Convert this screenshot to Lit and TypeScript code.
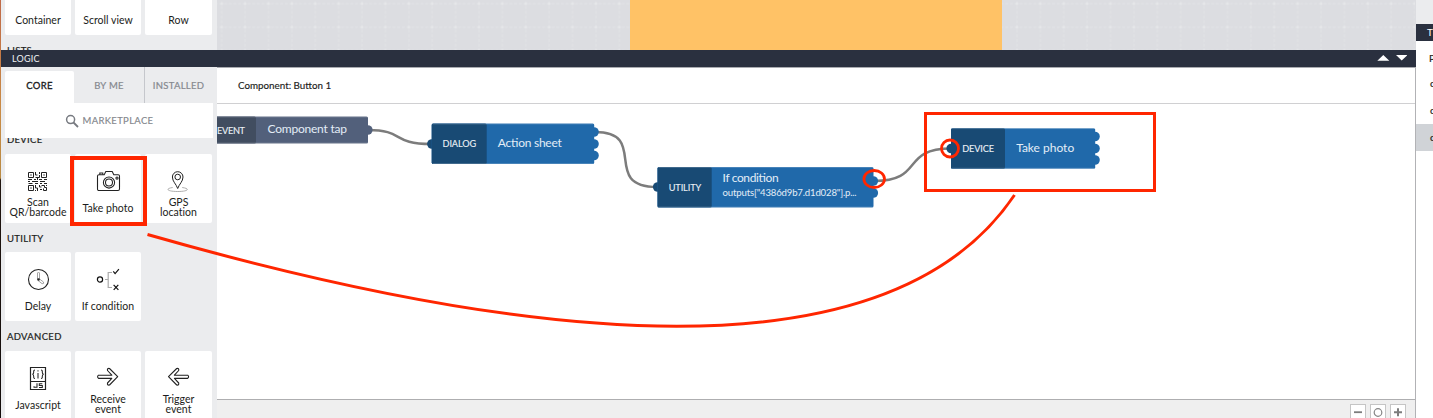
import { LitElement, html, svg, css } from "lit";
import { customElement, property } from "lit/decorators.js";

const icons: Record<string, unknown> = {
  qr: svg`<g fill="none" stroke="#222" stroke-width="1" transform="translate(-1 0)">
    <path d="M2.500 2.500h5v5h-5zM15.500 2.500h5v5h-5zM2.500 15.500h5v5h-5z"/>
    <path d="M4.500 5h1M17.500 5h1M4.500 18h1" stroke-width="1.500"/>
    <path d="M9.500 2v3h2M13.500 2v2M9.500 7.500h4V5M11.500 7v3M2 9.500h4M8 9.500h2M13 9.500h3M18 9.500h3M2 11.500h2M6 11.500h6M14 11.500h5M2.500 13.500h4M9 13.500h3M14 13.500h2M18 13.500h3M9.500 15v3h2v3M9.500 20v1M13.500 15v2h2M14 19.500h2M15.500 15.500h3v2M18.500 17.500h2v3h-3v-2M20.500 15v1"/></g>`,
  camera: svg`<g fill="none" stroke="#222" stroke-width="1.050">
    <path d="M2 4.700h5.200l1.600-3.200h6.400l1.600 3.200h4.400q1.300 0 1.300 1.300v13q0 1.500-1.500 1.500H2q-1.500 0-1.500-1.500V6q0-1.300 1.500-1.300z"/>
    <path d="M2.800 4.700V3h3v1.700M.5 8v9M22.500 8v9"/><circle cx="12" cy="12.500" r="5.600"/><circle cx="12" cy="12.500" r="3.500"/><circle cx="20" cy="8" r="1.100"/></g>`,
  pin: svg`<g fill="none" transform="translate(-.8 0)"><path d="M6.500 17.500c-8 1.200-5.500 4 5 4s13-2.800 4.500-4" stroke="#999" stroke-width=".8"/>
    <path d="M11.500 18.500C10 14 6.200 11.500 6.200 7a5.300 5.300 0 0 1 10.600 0c0 4.500-3.800 7-5.300 11.500z" stroke="#222"/><circle cx="11.500" cy="7" r="2.800" stroke="#222"/></g>`,
  clock: svg`<g fill="none"><circle cx="11.500" cy="11.500" r="10" stroke="#222" stroke-width="1.100"/><path d="M10.500 11V5q1-2 2 0v6l4 3q.8 2-1.400 1.700L11 12.500" stroke="#999" stroke-width=".9"/><circle cx="11.500" cy="11.500" r="1.300" fill="#222"/></g>`,
  branch: svg`<g fill="none"><path d="M8 11.500h3.200M15 4.500h-3.800v15H15" stroke="#aaa" stroke-width="1.200"/><circle cx="3" cy="11.500" r="2.600" stroke="#111" stroke-width="1.200"/>
    <path d="M16.300 3.300l1.800 2.300 3.800-4.500M16.600 16.800l4.800 5M21.300 16.800l-4.600 5" stroke="#111" stroke-width="1.200"/></g>`,
  js: svg`<g fill="none" stroke="#222" transform="translate(-.5 -.5)"><path d="M4 1h15v22H4zM4 15h15" stroke-width="1.200"/>
    <path d="M8.500 3.500q-1.500 0-1.300 2.300 0 1.800-1.300 2 1.300.2 1.300 2Q7 12 8.500 12M14.500 3.500q1.500 0 1.300 2.300 0 1.800 1.300 2-1.300.2-1.300 2Q16 12 14.500 12M11.500 6.500V12M11.500 3.800v1.300" stroke-width="1.050"/>
    <path d="M10.500 16.800v4H7.500v-1M15.800 17.300h-3v1.700h3v1.900h-3.300" stroke-width="1.050"/></g>`,
  right: svg`<path transform="translate(-.8 -2)" d="M2.300 10.200h13.300l-4.300-4.700q-.5-2.500 2-2l8.200 8.200-8.200 8.300q-2.500.5-2-2l4.300-4.600H2.300q-1.800-1.600 0-3.200z" fill="none" stroke="#222" stroke-width="1.100" stroke-linejoin="round"/>`,
  left: svg`<path transform="translate(0 -2)" d="M20.700 10.200H7.400l4.300-4.700q.5-2.500-2-2l-8.200 8.200L9.700 20q2.500.5 2-2l-4.300-4.600h13.300q1.800-1.600 0-3.200z" fill="none" stroke="#222" stroke-width="1.100" stroke-linejoin="round"/>`,
};

@customElement("palette-card")
class PaletteCard extends LitElement {
  @property() icon = "";
  @property({ attribute: false }) lines: string[] = [];

  static styles = css`
    :host { display: block; height: 69px; background: #fff; border-radius: 2px; }
    .card { display: flex; flex-direction: column; align-items: center; height: 69px; }
    svg { display: block; width: 23px; height: 23px; flex: none; margin-top: 16px; overflow: visible; }
    .text { flex: none; margin-top: 9px; font-size: 10.500px; line-height: 12px; letter-spacing: 0.02px; text-align: center; color: #1c1d20; white-space: nowrap; }
    .double { margin-top: 4px; line-height: 10px; }
  `;

  render() {
    return html`<div class="card">
      <svg viewBox="0 0 23 23">${icons[this.icon]}</svg>
      <div class="text ${this.lines.length > 1 ? "double" : ""}">${this.lines.map((l) => html`<div>${l}</div>`)}</div>
    </div>`;
  }
}

interface FlowNode {
  x: number; y: number; w: number; h: number; split: number;
  kind: string; kx: number; kw: number;
  title: string; tx: number; tw: number; ty: number;
  dark: string; light: string; input?: number; outputs: number[]; detail?: string;
}

const blue = { dark: "#184a74", light: "#2069aa" };
const nodes: FlowNode[] = [
  { x: 205, y: 116.500, w: 163, h: 27, split: 256, kind: "EVENT", kx: 217, kw: 28, title: "Component tap", tx: 267.500, tw: 79.500, ty: 133.200, dark: "#414d60", light: "#52607b", outputs: [130] },
  { x: 431.700, y: 123.500, w: 162.500, h: 40.500, split: 486.700, kind: "DIALOG", kx: 442.500, kw: 33.700, title: "Action sheet", tx: 497.800, tw: 64, ty: 147.400, ...blue, input: 144, outputs: [132, 144, 155.500] },
  { x: 657.500, y: 167, w: 216, h: 40.500, split: 711.700, kind: "UTILITY", kx: 668.700, kw: 32.500, title: "If condition", tx: 722.600, tw: 56, ty: 182.400, ...blue, input: 187, outputs: [181, 193], detail: 'outputs["4386d9b7.d1d028"].p...' },
  { x: 951, y: 128.200, w: 144.200, h: 40.500, split: 1005, kind: "DEVICE", kx: 962.300, kw: 31.700, title: "Take photo", tx: 1016.200, tw: 58, ty: 152.400, ...blue, input: 148.500, outputs: [136.500, 148.500, 160] },
];

const sections = [
  { name: "DEVICE", cards: [["qr", "Scan", "QR/barcode"], ["camera", "Take photo"], ["pin", "GPS", "location"]] },
  { name: "UTILITY", cards: [["clock", "Delay"], ["branch", "If condition"]] },
  { name: "ADVANCED", cards: [["js", "Javascript"], ["right", "Receive", "event"], ["left", "Trigger", "event"]] },
];

@customElement("app-root")
class AppRoot extends LitElement {
  static styles = css`
    :host { display: block; font-family: Lato, "Open Sans", sans-serif; color: #1c1d20; }
    * { box-sizing: border-box; }
    .window { position: relative; display: grid; grid-template-columns: 1px 1414px 18px; width: 1433px; height: 418px; overflow: hidden; background: #fff; }
    .edge { background: linear-gradient(#c06a48 0, #c98b45 110px, #b98a43 178px, #20150f 180px, #130d0c 418px); }
    .main { display: grid; grid-template-rows: 50px 17px 351px; min-width: 0; }
    .top { display: grid; grid-template-columns: 216px 1fr; overflow: hidden; }
    .components { background: #ebecee; overflow: hidden; }
    .row { display: grid; grid-template-columns: 66px 66px 67px; gap: 4px; padding-left: 4px; }
    .stub { display: flex; align-items: flex-end; justify-content: center; height: 35px; padding-bottom: 8px; background: #fff; border-radius: 0 0 2px 2px; font-size: 10.500px; line-height: 13px; letter-spacing: 0.02px; }
    .heading { padding: 1px 0 0 6px; font-size: 9.500px; line-height: 12px; letter-spacing: 0.32px; -webkit-text-stroke: 0.2px #1c1d20; }
    .lists { margin-top: 9px; }
    .artboard { display: flex; justify-content: flex-start; background: #dcdde1; }
    .artboard svg { display: block; width: 1198px; height: 50px; }
    .bar { display: flex; align-items: center; justify-content: space-between; padding: 0 9px 0 11px; background: #2a303f; color: #f1f2f5; font-size: 9px; letter-spacing: 0.2px; }
    .bar svg { width: 30px; height: 17px; display: block; }
    .body { display: grid; grid-template-columns: 216px 1fr; min-height: 0; }
    .side { display: flex; flex-direction: column; background: #ebecee; overflow: hidden; }
    .tabs { flex: none; display: grid; grid-template-columns: 69px 71px 67px; height: 36px; padding-left: 4px; }
    .tab { display: flex; align-items: center; justify-content: center; padding-top: 1px; font-size: 9.500px; letter-spacing: 0.3px; color: #85888e; -webkit-text-stroke: 0.2px #85888e; }
    .middle { border-right: 1px solid #c5c7cc; }
    .active { margin-top: 4px; padding-top: 0; padding-bottom: 3px; background: #fff; border-radius: 2px 2px 0 0; color: #17181b; -webkit-text-stroke: 0.3px #17181b; }
    .market { flex: none; display: flex; align-items: center; justify-content: center; gap: 4px; width: 208px; height: 35px; margin-left: 4px; background: #fff; font-size: 9.500px; letter-spacing: 0.32px; color: #83868c; -webkit-text-stroke: 0.15px #83868c; }
    .market svg { width: 14px; height: 14px; }
    .list { flex: 1; min-height: 0; overflow: hidden; }
    .section { height: 98px; }
    .section .heading { height: 20px; }
    .section:first-child { margin-top: -5px; height: 99px; }
    .section:first-child .heading { height: 21px; }
    .section:last-child .heading { height: 21px; }
    .work { display: grid; grid-template-rows: 37px 295px 19px; border-right: 1px solid #b2b2b5; background: #fff; min-width: 0; width: 1199px; }
    .crumb { display: flex; align-items: center; padding: 0 0 1px 21px; border-top: 1px solid #a9abb0; border-bottom: 1px solid #d0d0d2; font-size: 9.800px; letter-spacing: 0; -webkit-text-stroke: 0.15px #1c1d20; }
    .flow { display: block; width: 1198px; height: 295px; }
    .foot { display: flex; justify-content: flex-end; gap: 4px; padding: 4px 9px 0 0; border-top: 1px solid #aeaeb0; background: #efefef; overflow: hidden; }
    .zoom { flex: none; width: 16px; height: 16px; border: 1px solid #c5c5c5; background: #fff; }
    .zoom svg { display: block; width: 14px; height: 14px; }
    .right { position: relative; overflow: hidden; font-size: 10px; white-space: nowrap; }
    .cap { height: 24px; margin-left: 1px; background: #ebecee; }
    .title { height: 17px; margin-left: 1px; padding-left: 11px; line-height: 17px; background: #2a303f; color: #fff; }
    .item { height: 27px; margin-left: 1px; padding-left: 14px; line-height: 27px; -webkit-text-stroke: 0.2px #1c1d20; }
    .first { height: 29px; padding: 4px 0 0 13px; }
    .selected { background: #d0d3d7; }
    .notes { position: absolute; inset: 0; width: 1433px; height: 418px; pointer-events: none; }
  `;

  private node(n: FlowNode) {
    const mid = n.y + n.h / 2;
    return svg`<g>
      ${n.outputs.map((y) => svg`<circle cx=${n.x + n.w - 0.2} cy=${y} r="4.800" fill=${n.light}/>`)}
      ${n.input ? svg`<circle cx=${n.x + 0.2} cy=${n.input} r="4.800" fill=${n.dark}/>` : ""}
      <rect x=${n.x} y=${n.y} width=${n.w} height=${n.h} rx="1.500" fill=${n.light}/>
      <rect x=${n.x} y=${n.y} width=${n.split - n.x} height=${n.h} rx="1.500" fill=${n.dark}/>
      <path d="M${n.x + 1} ${n.y + 0.4}H${n.x + n.w - 1}M${n.x + 1} ${n.y + n.h - 0.4}H${n.x + n.w - 1}" stroke="#fff" stroke-opacity=".25" stroke-width=".8"/>
      <text x=${n.kx} y=${mid + 3.5} font-size="9.200" fill="#edf2f7" stroke="#edf2f7" stroke-width=".1" textLength=${n.kw}>${n.kind}</text>
      <text x=${n.tx} y=${n.ty} font-size="12" fill="#e3edf7" textLength=${n.tw}>${n.title}</text>
      ${n.detail ? svg`<text x=${n.tx} y="195.800" font-size="9.600" fill="#e3edf7" textLength="134">${n.detail}</text>` : ""}
    </g>`;
  }

  render() {
    return html`<div class="window">
      <div class="edge"></div>
      <div class="main">
        <div class="top">
          <div class="components">
            <div class="row">${["Container", "Scroll view", "Row"].map((t) => html`<div class="stub">${t}</div>`)}</div>
            <div class="heading lists">LISTS</div>
          </div>
          <div class="artboard">
            <svg viewBox="217 0 1198 50">
              <defs><pattern id="grid" patternUnits="userSpaceOnUse" x="210" y="-8" width="23.390" height="23.500">
                <path d="M0 11.700H23.390M11.700 0V23.500" stroke="#e3e4e7" stroke-width=".8" stroke-dasharray="3 1.700"/>
                <path d="M10.200 11.700h3M11.700 10.200v3" stroke="#e7e8ea"/></pattern></defs>
              <rect x="217" width="1198" height="50" fill="#dcdde1"/>
              <rect x="217" width="1198" height="50" fill="url(#grid)"/>
              <rect x="630" width="372" height="50" fill="#ffc266"/>
            </svg>
          </div>
        </div>
        <div class="bar"><span>LOGIC</span>
          <svg viewBox="1377 50 30 17"><path d="M1377.300 60.700l6-5.700 6 5.700zM1396 55h11.400l-5.700 5.600z" fill="#fff"/></svg>
        </div>
        <div class="body">
          <div class="side">
            <div class="tabs"><div class="tab active">CORE</div><div class="tab middle">BY ME</div><div class="tab">INSTALLED</div></div>
            <div class="market">
              <svg viewBox="0 0 14 14" fill="none" stroke="#777a80"><circle cx="5.600" cy="5.600" r="4" stroke-width="1.500"/><path d="M8.500 8.500l4.500 4.500" stroke-width="1.800"/></svg>
              <span>MARKETPLACE</span>
            </div>
            <div class="list">
              ${sections.map((s) => html`<div class="section"><div class="heading">${s.name}</div>
                <div class="row">${s.cards.map(([icon, ...lines]) => html`<palette-card .icon=${icon} .lines=${lines}></palette-card>`)}</div></div>`)}
            </div>
          </div>
          <div class="work">
            <div class="crumb">Component: Button 1</div>
            <svg class="flow" viewBox="217 104 1198 295">
              <g fill="none" stroke="#7c7c7c" stroke-width="2.500">
                <path d="M368 130C405 130 391 144 431 144"/>
                <path d="M595 132C650 132 600 187 657 187"/>
                <path d="M874 181C925 181 900 148.500 951 148.500"/>
              </g>
              ${nodes.map((n) => this.node(n))}
            </svg>
            <div class="foot">
              <div class="zoom"><svg viewBox="0 0 14 14"><path d="M3 7.200h8" stroke="#7d7d7d" stroke-width="1.800"/></svg></div>
              <div class="zoom"><svg viewBox="0 0 14 14"><circle cx="7" cy="7.500" r="3.800" fill="none" stroke="#858585" stroke-width="1.200"/></svg></div>
              <div class="zoom"><svg viewBox="0 0 14 14"><path d="M3 7.200h8M7 3.200v8" stroke="#7d7d7d" stroke-width="2"/></svg></div>
            </div>
          </div>
        </div>
      </div>
      <div class="right">
        <div class="cap"></div>
        <div class="title">TREE</div>
        <div class="item first">Page</div>
        <div class="item">cell</div>
        <div class="item">cell</div>
        <div class="item selected">cell</div>
      </div>
      <svg class="notes" viewBox="0 0 1433 418" fill="none" stroke="#ff2600" stroke-width="3">
        <rect x="72" y="158" width="73" height="66" stroke-width="4"/>
        <rect x="925.500" y="113.500" width="229" height="77"/>
        <ellipse cx="874.200" cy="179" rx="10.300" ry="8.500" stroke-width="2.800"/>
        <circle cx="950" cy="148.500" r="8.500" stroke-width="2.800"/>
        <path d="M147.500 234.500Q852 436 1014.500 195"/>
      </svg>
    </div>`;
  }
}
